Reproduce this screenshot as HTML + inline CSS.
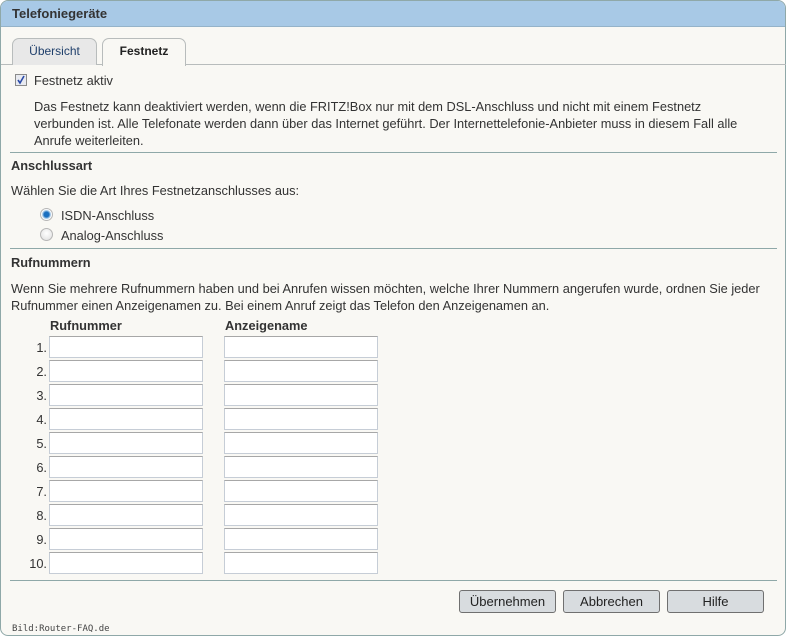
<!DOCTYPE html>
<html><head><meta charset="utf-8">
<style>
*{margin:0;padding:0;box-sizing:border-box}
body{width:787px;height:637px;background:#fff;font-family:"Liberation Sans",sans-serif;font-size:12.8px;color:#333;position:relative;overflow:hidden}
.frame{position:absolute;left:0;top:0;width:786px;height:636px;border:1px solid #8fa8a8;border-radius:8px;background:#f9f8f4;overflow:hidden}
.hdr{position:absolute;left:0;top:0;right:0;height:26px;background:#a8c9e6;border-bottom:1px solid #95b3c9}
.hdr span{position:absolute;left:11px;top:5px;font-weight:bold;font-size:13px;color:#333}
.c{position:absolute;left:0;top:0;width:787px;height:637px}
.t{position:absolute;white-space:nowrap}
.tab{position:absolute;top:38px;height:27px;border:1px solid #b8bcbc;border-bottom:none;border-radius:7px 7px 0 0;text-align:center;line-height:24px;font-size:12px}
.sep{position:absolute;left:10px;width:767px;height:1px;background:#8fa8a8}
.in{position:absolute;width:154px;height:22px;background:#fff;border:1px solid #c6cdd6;border-top-color:#a7a7a7}
.num{position:absolute;left:20px;width:27px;text-align:right}
.btn{position:absolute;top:590px;height:23px;width:97px;background:#d8dcdf;border:1px solid #707070;border-radius:3px;text-align:center;line-height:21px;font-size:13px;color:#222}
.rad{position:absolute;left:40px;width:13px;height:13px;border-radius:50%;border:1px solid #b6b6b6;background:radial-gradient(circle at 50% 40%,#fff,#ddd)}
</style></head><body>
<div class="frame"><div class="hdr"><span>Telefoniegeräte</span></div></div>
<div class="c">
<div style="position:absolute;left:1px;right:1px;top:64px;height:1px;background:#b8bcbc"></div>
<div class="tab" style="left:12px;width:85px;background:#e8e8e8;color:#1f3f6b">Übersicht</div>
<div class="tab" style="left:102px;width:84px;background:#f9f8f4;height:28px;font-weight:bold;color:#222">Festnetz</div>
<div style="position:absolute;left:15px;top:74px;width:12px;height:12px;border:1px solid #8b8b8b;background:#e8eaf0"><svg width="10" height="10" style="position:absolute;left:0;top:0"><path d="M2 5 L4 8 L8 1" stroke="#2a4aa8" stroke-width="1.6" fill="none"/></svg></div>
<div class="t" style="left:34px;top:73px">Festnetz aktiv</div>
<div class="t" style="left:34px;top:98px;line-height:17px">Das Festnetz kann deaktiviert werden, wenn die FRITZ!Box nur mit dem DSL-Anschluss und nicht mit einem Festnetz<br>verbunden ist. Alle Telefonate werden dann über das Internet geführt. Der Internettelefonie-Anbieter muss in diesem Fall alle<br>Anrufe weiterleiten.</div>
<div class="sep" style="top:152px"></div>
<div class="t" style="left:11px;top:158px;font-weight:bold">Anschlussart</div>
<div class="t" style="left:11px;top:183px">Wählen Sie die Art Ihres Festnetzanschlusses aus:</div>
<div class="rad" style="top:208px;background:radial-gradient(circle,#1a6fc0 0 2.5px,#7fb0dc 3.5px,#fff 5px)"></div>
<div class="t" style="left:61px;top:208px">ISDN-Anschluss</div>
<div class="rad" style="top:228px"></div>
<div class="t" style="left:61px;top:228px">Analog-Anschluss</div>
<div class="sep" style="top:248px"></div>
<div class="t" style="left:11px;top:255px;font-weight:bold">Rufnummern</div>
<div class="t" style="left:11px;top:280px;line-height:17px">Wenn Sie mehrere Rufnummern haben und bei Anrufen wissen möchten, welche Ihrer Nummern angerufen wurde, ordnen Sie jeder<br>Rufnummer einen Anzeigenamen zu. Bei einem Anruf zeigt das Telefon den Anzeigenamen an.</div>
<div class="t" style="left:50px;top:318px;font-weight:bold">Rufnummer</div>
<div class="t" style="left:225px;top:318px;font-weight:bold">Anzeigename</div>

<div class="num" style="top:340px">1.</div><div class="in" style="left:49px;top:336px"></div><div class="in" style="left:224px;top:336px"></div>
<div class="num" style="top:364px">2.</div><div class="in" style="left:49px;top:360px"></div><div class="in" style="left:224px;top:360px"></div>
<div class="num" style="top:388px">3.</div><div class="in" style="left:49px;top:384px"></div><div class="in" style="left:224px;top:384px"></div>
<div class="num" style="top:412px">4.</div><div class="in" style="left:49px;top:408px"></div><div class="in" style="left:224px;top:408px"></div>
<div class="num" style="top:436px">5.</div><div class="in" style="left:49px;top:432px"></div><div class="in" style="left:224px;top:432px"></div>
<div class="num" style="top:460px">6.</div><div class="in" style="left:49px;top:456px"></div><div class="in" style="left:224px;top:456px"></div>
<div class="num" style="top:484px">7.</div><div class="in" style="left:49px;top:480px"></div><div class="in" style="left:224px;top:480px"></div>
<div class="num" style="top:508px">8.</div><div class="in" style="left:49px;top:504px"></div><div class="in" style="left:224px;top:504px"></div>
<div class="num" style="top:532px">9.</div><div class="in" style="left:49px;top:528px"></div><div class="in" style="left:224px;top:528px"></div>
<div class="num" style="top:556px">10.</div><div class="in" style="left:49px;top:552px"></div><div class="in" style="left:224px;top:552px"></div>

<div class="sep" style="top:580px"></div>
<div class="btn" style="left:459px">Übernehmen</div>
<div class="btn" style="left:563px">Abbrechen</div>
<div class="btn" style="left:667px">Hilfe</div>
<div class="t" style="left:12px;top:624px;font-family:'DejaVu Sans Mono',monospace;font-size:9px;color:#444">Bild:Router-FAQ.de</div>
</div>
</body></html>
